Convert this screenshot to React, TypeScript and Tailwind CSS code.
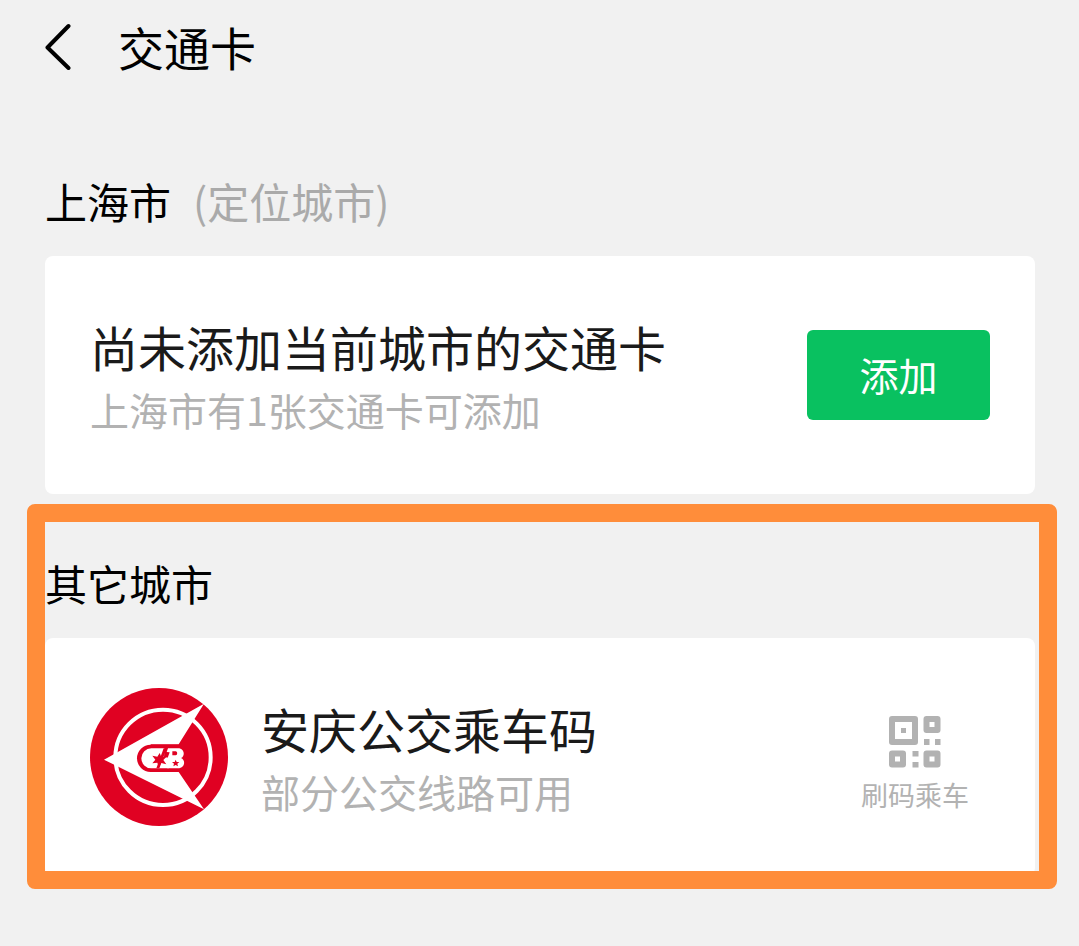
import type { ReactNode } from "react";

const font = "font-['Noto_Sans_CJK_SC',sans-serif]";

const BackIcon = () => (
  <svg width="28" height="48" viewBox="0 0 28 48" fill="none" stroke="currentColor" strokeWidth="4" aria-hidden="true">
    <path d="M23.500 4 2.500 25.500 23.500 46" strokeLinejoin="round" strokeLinecap="round" />
  </svg>
);

const BusLogo = () => (
  <svg className="size-[138px] shrink-0" viewBox="30 24 414 414" aria-hidden="true">
    <circle cx="237" cy="231" r="207" fill="#e00122" />
    <circle cx="249" cy="232" r="143" fill="none" stroke="#fff" strokeWidth="12" />
    <path d="M72 239 372 71 296 193H212v83h84l76 112Z" fill="#fff" />
    <path d="M300 194H212a41 41 0 0 0 0 82h88Z" fill="#e00122" />
    {/* C, then the slash and the star cut into it */}
    <path d="M254 205h-40a30 30 0 0 0 0 60h52l8-30-22-4Z" fill="#fff" />
    <path d="M251 205h9l-22 60h-9Z" fill="#e00122" />
    <path d="M239 219l5 12 17-2-11 11 9 13-15-4-8 12-4-13-15 2 9-11-9-12 15 3Z" fill="#e00122" />
    {/* B */}
    <path d="M264 205h30c20 0 22 24 9 29 15 6 12 31-9 31h-32l4-24-5-2 8-22-9-1Z" fill="#fff" />
    <path d="M277 214h10c6 0 6 12 0 12h-10ZM287 239l3 7 8 0-6 5 2 8-7-4-7 4 2-8-6-5 8 0Z" fill="#e00122" />
  </svg>
);

const QrIcon = () => (
  <svg width="52" height="52" viewBox="0 0 52 52" fill="none" stroke="currentColor" strokeLinejoin="round" aria-hidden="true">
    <path d="M3 3h23v23H3Z" strokeWidth="6" />
    <path d="M37.500 3h11v11h-11ZM3 37.500h11v11H3ZM37.500 37.500h11v11h-11Z" strokeWidth="6" />
    <path d="M12 12h5v5h-5ZM35 23h5.500v6H35ZM46 23h5.500v6H46ZM23.500 35h6v5.500h-6ZM23.500 46h6v5.500h-6Z" fill="currentColor" stroke="none" />
  </svg>
);

type CitySectionProps = {
  city: string;
  note?: string;
  highlighted?: boolean;
  children: ReactNode;
};

const CitySection = ({ city, note, highlighted, children }: CitySectionProps) => (
  <section className="relative">
    <h2 className="flex gap-[22px] pt-[59px] pb-[25px] text-[42px] leading-[60px] text-black">
      {city}
      {note ? <span className="text-[#aaaaaa]">{note}</span> : null}
    </h2>
    <div className="flex items-center rounded-lg bg-white px-[45px] py-[55px]">
      {children}
    </div>
    {highlighted
      ? <div className="pointer-events-none absolute top-[10px] -right-[22px] -bottom-[13px] -left-[18px] rounded-lg border-[18px] border-[#ff8d3a]" />
      : null}
  </section>
);

const CardText = ({ title, detail }: { title: string; detail: string }) => (
  <div className="min-w-0 flex-1 pb-[2px]">
    <h3 className="text-[48px] leading-[70px] text-[#1a1a1a]">{title}</h3>
    <p className="text-[39px] leading-[56px] text-[#b2b2b2]">{detail}</p>
  </div>
);

export default function App() {
  return (
    <div className={`min-h-screen bg-[#f1f1f1] pr-11 pl-[45px] ${font}`}>
      <header className="mb-5 flex h-[92px] items-center gap-[45px]">
        <button type="button" aria-label="返回" className="text-black">
          <BackIcon />
        </button>
        <h1 className="text-[46px] leading-[60px] text-black">交通卡</h1>
      </header>

      <main>
        <CitySection city="上海市" note="(定位城市)">
          <CardText title="尚未添加当前城市的交通卡" detail="上海市有1张交通卡可添加" />
          <button type="button" className="h-[90px] w-[183px] rounded-md bg-[#09c160] pb-[2px] text-[39px] text-white">
            添加
          </button>
        </CitySection>

        <CitySection city="其它城市" highlighted>
          <div className="-my-2 mr-[33px]">
            <BusLogo />
          </div>
          <CardText title="安庆公交乘车码" detail="部分公交线路可用" />
          <button type="button" className="mr-[21px] flex flex-col items-center gap-[13px] self-start pt-[23px] text-[27px] leading-7 text-[#b2b2b2]">
            <QrIcon />
            刷码乘车
          </button>
        </CitySection>
      </main>
    </div>
  );
}
